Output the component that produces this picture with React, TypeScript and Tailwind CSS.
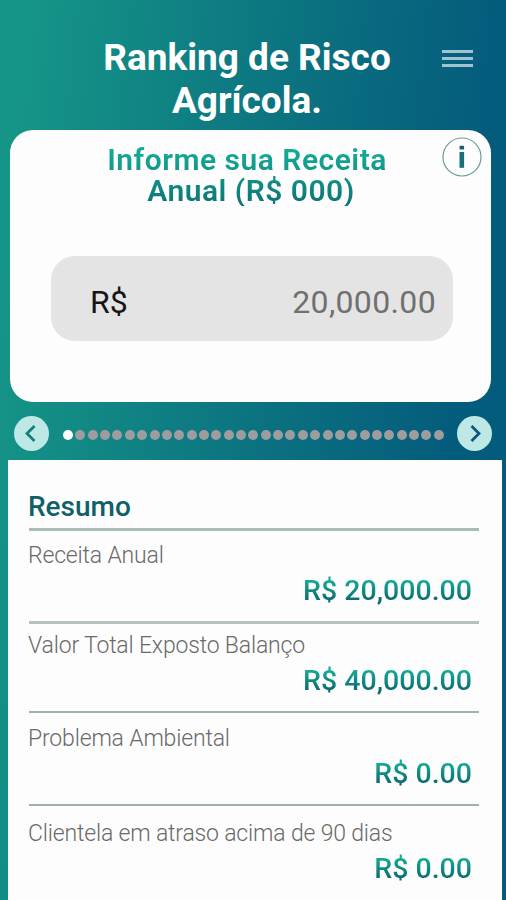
import * as React from 'react';

import clsx from 'clsx';

const STEP_COUNT = 31;

const ROWS: { label: string; value: string; className: string }[] = [
  {
    label: 'Receita Anual',
    value: 'R$ 20,000.00',
    className: 'h-[93px] border-b-[3px] border-[#b3c1bf] pt-[11px]',
  },
  {
    label: 'Valor Total Exposto Balanço',
    value: 'R$ 40,000.00',
    className: 'h-[89px] border-b-2 border-[#9fb0b0] pt-2',
  },
  {
    label: 'Problema Ambiental',
    value: 'R$ 0.00',
    className: 'h-[93px] border-b-2 border-[#9fb0b0] pt-3',
  },
  {
    label: 'Clientela em atraso acima de 90 dias',
    value: 'R$ 0.00',
    className: 'h-[94px] pt-3.5',
  },
];

export default function App() {
  return (
    <div className="flex h-[900px] w-[506px] flex-col overflow-hidden bg-linear-[96deg] from-[#159587] from-5% via-[#0b7180] via-52% to-[#045c7c] to-83% font-[Roboto,sans-serif]">
      <Header />

      <main className="flex min-h-0 flex-1 flex-col">
        <RevenueCard />
        <Stepper active={0} />
        <Summary />
      </main>
    </div>
  );
}

function Header() {
  return (
    <header className="flex h-[130px] shrink-0 items-start pt-[36px]">
      <h1 className="ml-[93px] w-[308px] text-center text-[37px] leading-[43px] font-bold whitespace-nowrap text-white">
        Ranking de Risco
        <br />
        Agrícola.
      </h1>
      <button type="button" aria-label="Menu" className="mt-[14px] ml-[41px] flex flex-col gap-1">
        <span className="h-[3px] w-[31px] bg-[#9fc3d3]" />
        <span className="h-[3px] w-[31px] bg-[#9fc3d3]" />
        <span className="h-[3px] w-[31px] bg-[#9fc3d3]" />
      </button>
    </header>
  );
}

function RevenueCard() {
  return (
    <section className="relative mr-[15px] ml-[10px] h-[272px] shrink-0 rounded-[23px] bg-[#fdfdfd] pt-[14px]">
      <h2 className="mr-[7px] text-center text-[30px] leading-[31px] font-semibold tracking-[0.5px] whitespace-nowrap">
        <span className="block bg-linear-to-b from-[#13b09c] to-[#129486] bg-clip-text text-transparent">
          Informe sua Receita
        </span>
        <span className="block bg-linear-to-b from-[#129486] to-[#0c7377] bg-clip-text pl-2 text-transparent">
          Anual (R$ 000)
        </span>
      </h2>

      <button type="button" aria-label="Informações" className="absolute top-[7px] right-[9px]">
        <svg width="40" height="40" viewBox="0 0 40 40" fill="none">
          <circle cx="20" cy="20" r="19" stroke="#6f9c98" strokeWidth="1.2" />
          <rect x="17.5" y="8.8" width="4.6" height="3.8" rx="1" fill="#16616b" />
          <rect x="17.5" y="15" width="4.6" height="15.8" fill="#17707a" />
        </svg>
      </button>

      <div className="mt-[50px] ml-[41px] flex h-[85px] w-[402px] items-center justify-between rounded-[24px] bg-[#e4e4e4] pt-1.5 pr-[17px] pl-[39px] text-[32px] leading-none">
        <span className="text-[#161616]">R$</span>
        <span className="tracking-[0.35px] text-[#707070]">20,000.00</span>
      </div>
    </section>
  );
}

function Stepper({ active }: { active: number }) {
  return (
    <nav className="flex h-[58px] shrink-0 items-center pt-[4px] pr-[14px] pl-[14px]">
      <ArrowButton label="Anterior" className="text-[#127f7d]">
        <path d="m20.5 10-7.5 7.5 7.5 7.5" />
      </ArrowButton>
      <div className="mt-[4px] ml-[14px] flex w-[381px] justify-between">
        {Array.from({ length: STEP_COUNT }, (_, i) => (
          <span
            key={i}
            className={clsx('size-2.5 rounded-full', i === active ? 'bg-white' : 'bg-[#9e9c9f]')}
          />
        ))}
      </div>
      <ArrowButton label="Próximo" className="ml-auto text-[#0d587a]">
        <path d="m14.5 10 7.5 7.5-7.5 7.5" />
      </ArrowButton>
    </nav>
  );
}

function ArrowButton({
  label,
  className,
  children,
}: {
  label: string;
  className: string;
  children: React.ReactNode;
}) {
  return (
    <button
      type="button"
      aria-label={label}
      className={clsx('size-[35px] shrink-0 rounded-full bg-[#bde8e6]', className)}
    >
      <svg
        width="35"
        height="35"
        viewBox="0 0 35 35"
        fill="none"
        stroke="currentColor"
        strokeWidth="2.8"
      >
        {children}
      </svg>
    </button>
  );
}

function Summary() {
  return (
    <section className="mr-[4px] ml-[8px] flex-1 bg-[#fdfdfd] pr-[23px] pl-[21px]">
      <h2 className="h-[71px] border-b-[3px] border-[#a9bcba] pt-[31px] text-[28px] leading-[32px] font-medium text-[#0f6068]">
        <span className="-ml-px">Resumo</span>
      </h2>
      {ROWS.map((row) => (
        <div key={row.label} className={clsx('flex flex-col whitespace-nowrap', row.className)}>
          <span className="-ml-px text-[23px] leading-[28px] font-light tracking-[-0.17px] text-[#6a6a6a]">
            {row.label}
          </span>
          <span className="mt-[5px] mr-[7px] self-end bg-linear-to-b from-[#15a892] from-20% to-[#0b6a70] to-80% bg-clip-text text-[28.5px] leading-[32px] font-medium text-transparent">
            {row.value}
          </span>
        </div>
      ))}
    </section>
  );
}
